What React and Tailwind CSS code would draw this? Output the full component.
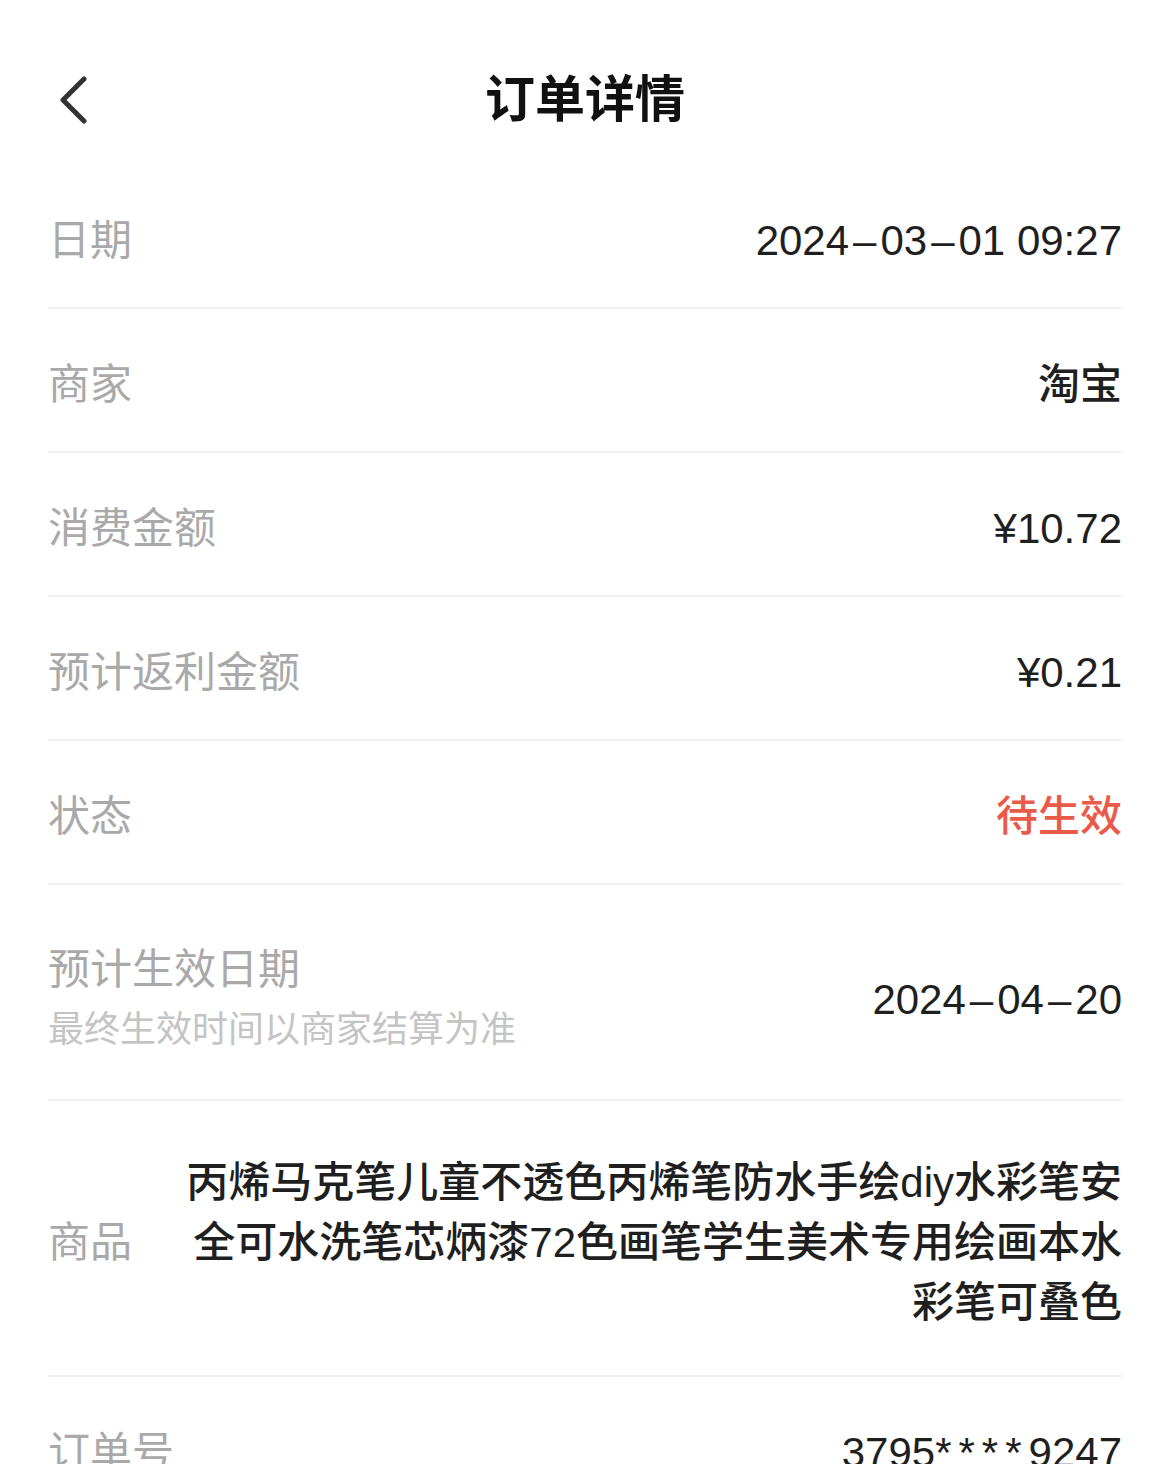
import React from 'react';

// PingFang-style dashes are wider than Arial's, so pad them a little
const Value = ({ text }) => {
  const parts = text.split(/(–|\*\*\*\*)/);
  return parts.map((p, i) => {
    if (p === '–') return <span key={i} className="px-[4px]">–</span>;
    if (p === '****') return <span key={i} className="tracking-[7px]">****</span>;
    return <React.Fragment key={i}>{p}</React.Fragment>;
  });
};

const rows = [
  { label: '日期', value: '2024–03–01 09:27' },
  { label: '商家', value: '淘宝' },
  { label: '消费金额', value: '¥10.72' },
  { label: '预计返利金额', value: '¥0.21' },
  { label: '状态', value: '待生效', red: true },
];

const Row = ({ label, value, red }) => (
  <div className="flex h-[144px] items-center justify-between border-b-2 border-[#f0f0f0] pt-[10px]">
    <span className="text-[42px] leading-[60px] text-[#a9a9a9]">{label}</span>
    <span className={`text-[42px] leading-[60px] font-medium ${red ? 'text-[#ea5a48]' : 'text-[#1f1f1f]'}`}>
      <Value text={value} />
    </span>
  </div>
);

const App = () => {
  return (
    <div className="min-h-screen bg-white font-['Liberation_Sans','Noto_Sans_CJK_SC',sans-serif]">
      <div className="relative flex h-[165px] justify-center pt-[70px]">
        <button className="absolute left-[56px] top-[76px] h-[48px] w-[34px]">
          <svg viewBox="0 0 34 48" className="h-[48px] w-[34px]" fill="none" stroke="#333333" strokeWidth="5" strokeLinecap="round" strokeLinejoin="round">
            <path d="M28 3 L7 24 L28 45" />
          </svg>
        </button>
        <h1 className="text-[50px] leading-[60px] font-bold text-[#111111]">订单详情</h1>
      </div>

      <div className="px-[48px]">
        {rows.map((r) => (
          <Row key={r.label} {...r} />
        ))}

        <div className="flex items-center justify-between border-b-2 border-[#f0f0f0] pt-[55px] pb-[39px]">
          <div className="flex flex-col">
            <span className="text-[42px] leading-[60px] text-[#a9a9a9]">预计生效日期</span>
            <span className="text-[36px] leading-[60px] text-[#c4c4c4]">最终生效时间以商家结算为准</span>
          </div>
          <span className="text-[42px] leading-[60px] font-medium text-[#1f1f1f]">
            <Value text="2024–04–20" />
          </span>
        </div>

        <div className="flex items-center border-b-2 border-[#f0f0f0] pt-[52px] pb-[42px]">
          <span className="shrink-0 text-[42px] leading-[60px] text-[#a9a9a9]">商品</span>
          <span className="ml-[40px] flex-1 text-right text-[42px] leading-[60px] font-medium text-[#1f1f1f]">
            丙烯马克笔儿童不透色丙烯笔防水手绘diy水彩笔安全可水洗笔芯炳漆72色画笔学生美术专用绘画本水彩笔可叠色
          </span>
        </div>

        <Row label="订单号" value="3795****9247" />
      </div>
    </div>
  );
};

export default App;
